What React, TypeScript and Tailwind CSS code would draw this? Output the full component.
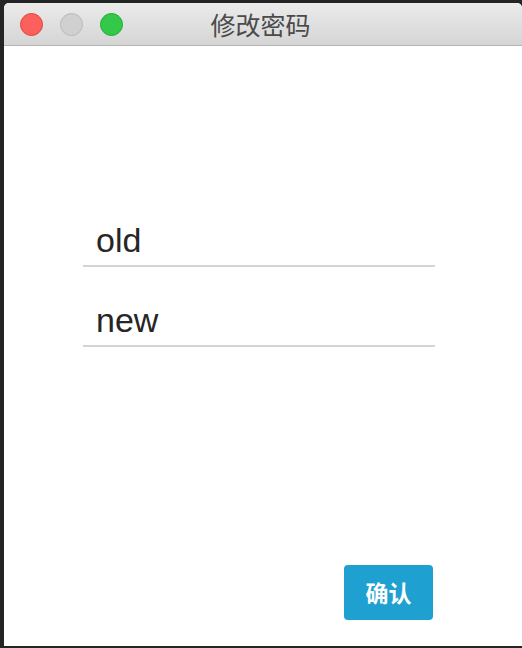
import React from 'react';

const App: React.FC = () => {
  return (
    <div className="w-[522px] h-[648px] bg-[#232425] pl-[4px] pt-[3px] pb-[2px] flex">
      <div className="flex-1 flex flex-col bg-white rounded-t-[5px] overflow-hidden">
        {/* Title bar */}
        <div className="relative h-[43px] shrink-0 bg-gradient-to-b from-[#ebebeb] to-[#d5d5d5] border-b border-[#b4b4b4] flex items-center">
          <div className="flex items-center gap-[17px] pl-[16px]">
            <span className="w-[23px] h-[23px] rounded-full bg-[#fc605c] border border-[#e0443e]" />
            <span className="w-[23px] h-[23px] rounded-full bg-[#d0d0d0] border border-[#b9b9b9]" />
            <span className="w-[23px] h-[23px] rounded-full bg-[#34c84a] border border-[#1eae32]" />
          </div>
          <div className="absolute inset-0 flex items-center justify-center pr-[5px]">
            <span className="text-[25px] text-[#4a4a4a] font-['Noto_Sans_CJK_SC',sans-serif] leading-none">修改密码</span>
          </div>
        </div>

        {/* Body */}
        <div className="flex-1 flex flex-col">
          <div className="pt-[169px] pl-[79px]">
            <div className="w-[352px] h-[52px] border-b-2 border-[#d3d5d5] flex items-end pb-[8px] pl-[13px]">
              <span className="text-[34px] leading-none text-[#262626] font-['Liberation_Sans',sans-serif]">old</span>
            </div>
            <div className="mt-[28px] w-[352px] h-[52px] border-b-2 border-[#d3d5d5] flex items-end pb-[8px] pl-[13px]">
              <span className="text-[34px] leading-none text-[#262626] font-['Liberation_Sans',sans-serif]">new</span>
            </div>
          </div>
          <div className="flex-1" />
          <div className="flex justify-end pr-[89px] pb-[26px]">
            <button className="w-[89px] h-[55px] rounded-[4px] bg-[#1ea0d1] text-white text-[23px] font-semibold font-['Noto_Sans_CJK_SC',sans-serif] flex items-center justify-center">
              确认
            </button>
          </div>
        </div>
      </div>
    </div>
  );
};

export default App;
